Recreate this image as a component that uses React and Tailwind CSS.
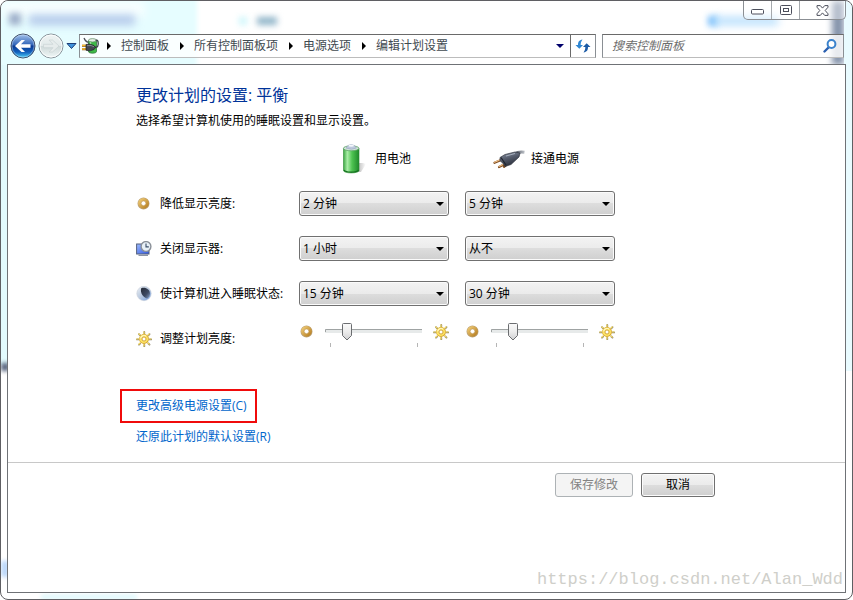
import { useState } from "react";

const breadcrumbs = ["控制面板", "所有控制面板项", "电源选项", "编辑计划设置"];

const timeouts = ["1 分钟", "2 分钟", "5 分钟", "15 分钟", "30 分钟", "1 小时", "从不"];

const rows = [
  { id: "dim", label: "降低显示亮度:", icon: RingIcon, battery: "2 分钟", plugged: "5 分钟" },
  { id: "display", label: "关闭显示器:", icon: DisplayIcon, battery: "1 小时", plugged: "从不" },
  { id: "sleep", label: "使计算机进入睡眠状态:", icon: MoonIcon, battery: "15 分钟", plugged: "30 分钟" },
];

function RingIcon() {
  return (
    <svg width="16" height="16" viewBox="0 0 16 16" className="shrink-0">
      <defs>
        <linearGradient id="ring" x1="0" y1="0" x2="1" y2="1">
          <stop offset="0" stopColor="#ecc772" />
          <stop offset="1" stopColor="#b98226" />
        </linearGradient>
      </defs>
      <circle cx="7.500" cy="7.500" r="4.100" fill="none" stroke="#8d6420" strokeWidth="3.800" opacity="0.6" />
      <circle cx="7.500" cy="7.300" r="3.900" fill="none" stroke="url(#ring)" strokeWidth="3" />
      <circle cx="7.500" cy="7.300" r="2.300" fill="#fff" stroke="#b98a3a" strokeWidth="0.5" />
    </svg>
  );
}

function SunIcon() {
  return (
    <svg width="16" height="16" viewBox="0 0 16 16" className="shrink-0">
      <g stroke="#8f8670" strokeWidth="1.800" strokeLinecap="round">
        <path d="M8.300 1v1.600M8.300 13.800v1.500M1 8.400h1.400M13.700 8.400h1.500M3 3.200l1.100 1.100M12.400 12.500l1.100 1.100M3 13.700l1.100-1.100M12.400 4.300l1.100-1.100" />
      </g>
      <g stroke="#f9dc58" strokeWidth="1.200" strokeLinecap="round">
        <path d="M8 .8v1.500M8 13.600v1.500M.8 8h1.500M13.600 8h1.500M2.800 2.800l1.100 1.100M12.100 12.100l1.100 1.100M2.800 13.300l1.100-1.100M12.100 4l1.100-1.100" />
      </g>
      <circle cx="8" cy="8" r="4.900" fill="#d8a62c" />
      <circle cx="7.800" cy="7.800" r="4.300" fill="#fbe263" />
      <path d="M4.600 7.400A3.600 3.600 0 0 1 10 5" fill="none" stroke="#fff8c8" strokeWidth="1.100" />
      <circle cx="8" cy="8" r="2" fill="#fff" stroke="#c9962a" strokeWidth="0.8" />
    </svg>
  );
}

function DisplayIcon() {
  return (
    <svg width="16" height="16" viewBox="0 0 16 16" className="shrink-0">
      <defs>
        <linearGradient id="screen" x1="0" y1="0" x2="1" y2="1">
          <stop offset="0" stopColor="#9dbcff" />
          <stop offset="1" stopColor="#2f55df" />
        </linearGradient>
      </defs>
      <rect x="0.6" y="3" width="12.400" height="10" fill="url(#screen)" stroke="#54607c" />
      <path d="M2.500 14.300h9.500" stroke="#8b93a4" strokeWidth="1.400" />
      <circle cx="10" cy="5.500" r="4.900" fill="#e8f0f6" stroke="#8a9098" strokeWidth="1.400" />
      <path d="M10 2.500v3.400h2.800" fill="none" stroke="#3a4e68" strokeWidth="1.100" />
    </svg>
  );
}

function MoonIcon() {
  return (
    <svg width="16" height="16" viewBox="0 0 16 16" className="shrink-0">
      <defs>
        <linearGradient id="moon" x1="0" y1="0" x2="1" y2="1">
          <stop offset="0" stopColor="#eef2f7" />
          <stop offset="0.5" stopColor="#b9c9df" />
          <stop offset="1" stopColor="#6d9be0" />
        </linearGradient>
        <linearGradient id="moonShade" x1="0" y1="0" x2="1" y2="1">
          <stop offset="0" stopColor="#262b36" />
          <stop offset="0.6" stopColor="#3d4a63" />
          <stop offset="1" stopColor="#8ba5cc" />
        </linearGradient>
      </defs>
      <circle cx="8" cy="7.500" r="7.200" fill="url(#moon)" stroke="#c9d0da" strokeWidth="0.6" />
      <path d="M5.200 2.200C9.500.600 14 3.500 14 7.600c0 2.200-1 4-2.600 5C7.500 11.800 3.800 7 5.200 2.200z" fill="url(#moonShade)" />
    </svg>
  );
}

function BatteryIcon() {
  return (
    <svg width="32" height="32" viewBox="0 0 32 32" className="shrink-0">
      <defs>
        <linearGradient id="cell" x1="0" x2="1">
          <stop offset="0" stopColor="#3da944" />
          <stop offset="0.25" stopColor="#a9eda6" />
          <stop offset="0.55" stopColor="#4fc452" />
          <stop offset="1" stopColor="#1f8a2b" />
        </linearGradient>
        <linearGradient id="cast" x1="0" x2="1">
          <stop offset="0" stopColor="#777" stopOpacity="0.6" />
          <stop offset="1" stopColor="#777" stopOpacity="0" />
        </linearGradient>
      </defs>
      <path d="M21 20h5l3 1-5 8h-5z" fill="url(#cast)" />
      <path d="M6.500 5.500v22c0 3.200 15.500 3.200 15.500 0v-22z" fill="url(#cell)" stroke="#2b8a32" strokeWidth="0.6" />
      <path d="M7 27c1 2.800 13.500 2.800 14.500 0" fill="none" stroke="#14701f" strokeWidth="1.100" />
      <ellipse cx="14.200" cy="5.300" rx="7.800" ry="2.500" fill="#cfe3d8" stroke="#5fa468" strokeWidth="0.8" />
      <path d="M9 5l2-2.500q3.200-1.800 6.400 0L19.500 5q-5 2.600-10.500 0z" fill="#bcc7dc" stroke="#93a0b8" strokeWidth="0.5" />
      <ellipse cx="14.200" cy="2.800" rx="2.800" ry="1" fill="#f4f7fc" />
    </svg>
  );
}

function PlugIcon() {
  return (
    <svg width="32" height="32" viewBox="0 0 32 32" className="shrink-0">
      <defs>
        <linearGradient id="plug" x1="0" y1="0" x2="0.4" y2="1">
          <stop offset="0" stopColor="#8f98a8" />
          <stop offset="0.5" stopColor="#555c6c" />
          <stop offset="1" stopColor="#2a2f3b" />
        </linearGradient>
        <linearGradient id="cord" gradientUnits="userSpaceOnUse" x1="22" y1="9" x2="32" y2="9">
          <stop offset="0" stopColor="#4a505c" />
          <stop offset="1" stopColor="#c4c8ce" />
        </linearGradient>
      </defs>
      <path d="M22 11c3-2.500 5-2.600 9.500-1.800" fill="none" stroke="url(#cord)" strokeWidth="3" />
      <path d="M1.500 19.800l9-3.800M6 24l8-4M11 23.800l3-2.500" stroke="#7c4a1e" strokeWidth="2.200" strokeLinecap="round" />
      <path d="M1.500 19.300l9-3.800M6 23.400l8-4" stroke="#f0c088" strokeWidth="1.100" strokeLinecap="round" />
      <path d="M7 14.500 12 11.500l10-2.500 5 1-1 4-8 7.500-6 2-2-3-3-3z" fill="url(#plug)" stroke="#30353f" strokeWidth="0.7" />
      <path d="M8 14.500l5 7.500" stroke="#1f242e" strokeWidth="1.200" />
      <path d="M13 13l9-2.500" stroke="#a7afbd" />
    </svg>
  );
}

function PowerIcon() {
  return (
    <svg width="18" height="18" viewBox="0 0 18 18" className="shrink-0">
      <path d="M6.500 3.500v11c0 2.300 8 2.300 8 0v-11z" fill="#3fba48" stroke="#246c2c" strokeWidth="0.7" />
      <path d="M8.500 5v9" stroke="#a2e8a0" strokeWidth="1.400" />
      <ellipse cx="10.500" cy="3.300" rx="4" ry="1.700" fill="#e4efe4" stroke="#5f8a64" strokeWidth="0.7" />
      <path d="M2 1c1 3 2.500 4 4.500 4.500" fill="none" stroke="#4b5058" strokeWidth="1.200" />
      <path d="M12 10c3.500 1 5-1 4-5.500-.5-1.500-1.800-1.500-2.500-1" fill="none" stroke="#3c424b" strokeWidth="1.300" />
      <path d="M0 8.700h4.500M0 12.300h4.500" stroke="#8a5c0c" strokeWidth="2" />
      <path d="M0 8.400h4.500M0 12h4.500" stroke="#f6b92c" strokeWidth="1.300" />
      <path d="M4 7.500l3.500-.5 4.500 1.500 1.500 2-1.500 2-4.500 1.500L4 13.200z" fill="#42474f" stroke="#1c1f24" strokeWidth="0.7" />
      <path d="M5 8.700l4-.2 3 1.200" fill="none" stroke="#90969f" strokeWidth="0.8" />
    </svg>
  );
}

function BackIcon() {
  return (
    <svg width="26" height="26" viewBox="0 0 26 26" className="shrink-0">
      <defs>
        <linearGradient id="back" x1="0" y1="0" x2="0" y2="1">
          <stop offset="0" stopColor="#a5c3ec" />
          <stop offset="0.45" stopColor="#3266b9" />
          <stop offset="0.5" stopColor="#0b3a92" />
          <stop offset="0.75" stopColor="#1260bd" />
          <stop offset="1" stopColor="#4fd6fb" />
        </linearGradient>
      </defs>
      <circle cx="13" cy="13" r="12" fill="url(#back)" stroke="#44516a" />
      <circle cx="13" cy="13" r="11" fill="none" stroke="#d4e8fb" strokeOpacity="0.4" />
      <path d="M5 13l6.500-6H15l-4 4.300h9.500v3.400H11l4 4.300h-3.500z" fill="#fff" />
    </svg>
  );
}

function ForwardIcon() {
  return (
    <svg width="26" height="26" viewBox="0 0 26 26" className="shrink-0">
      <defs>
        <linearGradient id="forward" x1="0" y1="0" x2="0" y2="1">
          <stop offset="0" stopColor="#eef3f3" />
          <stop offset="0.48" stopColor="#e2eaea" />
          <stop offset="0.52" stopColor="#d0dada" />
          <stop offset="1" stopColor="#f0f8f8" />
        </linearGradient>
      </defs>
      <circle cx="13" cy="13" r="12" fill="url(#forward)" stroke="#87939a" />
      <circle cx="13" cy="13" r="11" fill="none" stroke="#fff" strokeOpacity="0.8" />
      <path d="M21 13l-6.500-6H11l4 4.300H5.500v3.400H15l-4 4.300h3.500z" fill="#e6ecec" stroke="#c6d0d1" strokeWidth="0.6" />
    </svg>
  );
}

function RefreshIcon() {
  return (
    <svg width="16" height="16" viewBox="0 0 16 16">
      <path d="M.5 7H3c0-3 1-5 4.500-5.500C6 3.500 5.700 5 5.700 7H8l-3.700 3.800z" fill="#2f86d2" />
      <path d="M15.500 9H13c0 3-1 5-4.500 5.500C10 12.500 10.300 11 10.300 9H8l3.700-3.800z" fill="#1c5ba6" />
    </svg>
  );
}

function SearchIcon() {
  return (
    <svg width="14" height="14" viewBox="0 0 14 14" className="mr-1.5 shrink-0">
      <path d="M1.500 12.500l4-4" stroke="#2a5fb0" strokeWidth="2.400" strokeLinecap="round" />
      <circle cx="8.500" cy="5" r="3.900" fill="#fff" stroke="#3a82cc" strokeWidth="2" />
    </svg>
  );
}

function DownArrow({ className }) {
  return (
    <svg width="8" height="4" viewBox="0 0 8 4" className={className}>
      <path d="M0 0h8L4 4z" fill="currentColor" />
    </svg>
  );
}

// blurred shapes of the windows that show through the glass frame
function Glass() {
  return (
    <div className="absolute inset-0 overflow-hidden rounded-lg" aria-hidden="true">
      <div className="absolute -left-2 -top-2 h-20 w-[204px] bg-[#e6fdff] blur-[2px]" />
      <div className="absolute left-0 top-16 h-[300px] w-2 bg-[#e2fafd]" />
      <div className="absolute left-0 top-[362px] h-2 w-2 bg-[#53617c] blur-[2px]" />
      <div className="absolute left-0 top-[560px] h-4 w-2 bg-[#bcd8fa] blur-[2px]" />
      <div className="absolute left-0 top-0 h-4 w-36 bg-white/70 blur-[5px]" />
      <div className="absolute left-2 top-3 h-3 w-3 bg-[#9fb0cb] blur-[3px]" />
      <div className="absolute left-7 top-[14px] h-2.5 w-[106px] bg-[#b3c8ea] blur-[4px]" />
      <div className="absolute left-[238px] top-4 h-2 w-2 bg-[#cdf6fb] blur-[3px]" />
      <div className="absolute left-[256px] top-4 h-2 w-5 bg-[#8fb4c8] blur-[3px]" />
      <div className="absolute right-[134px] top-[15px] h-2.5 w-2.5 bg-[#7cc0fb] blur-[3px]" />
      <div className="absolute right-[74px] top-4 h-2 w-[64px] bg-[#b5defd] blur-[4px]" />
      <div className="absolute right-2 top-0 h-16 w-3 bg-[#8493ab] blur-[3px]" />
      <div className="absolute right-0 top-0 h-[370px] w-2 bg-[#e9fbff]" />
      <div className="absolute bottom-0 left-10 h-1 w-24 bg-[#d8f6fb] blur-[2px]" />
    </div>
  );
}

function WindowButtons() {
  const button = "flex h-full items-center justify-center";
  return (
    <div className="flex h-[19px] w-[103px] rounded-b-[5px] border border-t-0 border-[#8b8f94] bg-white/40">
      <button className={`${button} w-7 border-r border-[#a5a9ad]`} aria-label="最小化">
        <svg width="13" height="6" viewBox="0 0 13 6" className="mt-1">
          <rect x="0.5" y="0.5" width="12" height="4.500" rx="1" fill="#fff" stroke="#4c4f5c" />
        </svg>
      </button>
      <button className={`${button} w-7 border-r border-[#a5a9ad]`} aria-label="最大化">
        <svg width="12" height="10" viewBox="0 0 12 10">
          <rect x="0.5" y="0.5" width="11" height="9" rx="1" fill="#fff" stroke="#4c4f5c" />
          <rect x="3.500" y="3.500" width="5" height="3" fill="#fff" stroke="#4c4f5c" />
        </svg>
      </button>
      <button className={`${button} flex-1`} aria-label="关闭">
        <svg width="13" height="11" viewBox="0 0 13 11">
          <path
            d="M1 .600h3.300l2.200 2.500L8.700.600H12v1.600L9.200 5.500 12 8.800v1.600H8.700L6.500 7.900l-2.200 2.500H1V8.800l2.800-3.300L1 2.200z"
            fill="#fff"
            stroke="#4c4f5c"
          />
        </svg>
      </button>
    </div>
  );
}

function NavBar() {
  return (
    <div className="flex h-6 items-center pl-[3px] pr-0.5">
      <button aria-label="后退" className="shrink-0"><BackIcon /></button>
      <button aria-label="前进" className="ml-0.5 shrink-0"><ForwardIcon /></button>
      <button aria-label="最近的页面" className="ml-0.5 mr-0.5 shrink-0">
        <svg width="11" height="8" viewBox="0 0 11 8">
          <path d="M1 1.500h9L5.500 6.500z" fill="#3f93dc" stroke="#1e3f78" />
        </svg>
      </button>

      <div className="flex h-full min-w-0 flex-1 border border-b-[#bcbcbc] border-l-[#8a8f94] border-r-[#8a8f94] border-t-[#6a6a6a] bg-white/80">
        <nav className="flex min-w-0 flex-1 items-center overflow-hidden pl-0.5 text-[#3f4a50]">
          <div className="-mr-1 shrink-0"><PowerIcon /></div>
          {breadcrumbs.map((name) => (
            <div key={name} className="flex shrink-0 items-center">
              <span className="flex w-[25px] justify-center">
                <svg width="4" height="8" viewBox="0 0 4 8">
                  <path d="M0 0v8l4-4z" fill="#000" />
                </svg>
              </span>
              <button className="leading-5">{name}</button>
            </div>
          ))}
        </nav>
        <button aria-label="以前的位置" className="px-1.5 text-[#00006b]"><DownArrow /></button>
        <button aria-label="刷新" className="flex w-[25px] items-center justify-center border-l border-[#6a6a6a]">
          <RefreshIcon />
        </button>
      </div>

      <div className="ml-1.5 flex h-full w-[242px] items-center border border-b-[#bcbcbc] border-l-[#8a8f94] border-r-[#8a8f94] border-t-[#6a6a6a] bg-white/80">
        <input
          type="text"
          aria-label="搜索控制面板"
          placeholder="搜索控制面板"
          className="min-w-0 flex-1 bg-transparent pl-[9px] italic outline-none placeholder:text-[#6d6d6d]"
        />
        <SearchIcon />
      </div>
    </div>
  );
}

function TimeoutSelect({ id, label, defaultValue }) {
  return (
    <div className="relative self-center">
      <select
        id={id}
        aria-label={label}
        defaultValue={defaultValue}
        className="block h-[25px] w-full appearance-none rounded-[3px] border border-[#707070] bg-[linear-gradient(#f3f3f3,#ebebeb_50%,#dddddd_50%,#cfcfcf)] pl-[3px] pr-5 shadow-[inset_0_0_0_1px_#fbfbfb]"
      >
        {timeouts.map((t) => (
          <option key={t}>{t}</option>
        ))}
      </select>
      <DownArrow className="pointer-events-none absolute right-[5px] top-[11px]" />
    </div>
  );
}

function BrightnessSlider({ id, label }) {
  const [value, setValue] = useState(19);
  // thumb is 11px wide and travels between the two ticks
  const x = Math.round(6 + (value / 100) * 86);

  return (
    <div className="flex items-start justify-between">
      <div className="pt-0.5"><RingIcon /></div>
      <div className="relative h-[26px] w-[98px]">
        <svg width="98" height="26" viewBox="0 0 98 26">
          <defs>
            <linearGradient id={`${id}-thumb`} x1="0" y1="0" x2="0" y2="1">
              <stop offset="0" stopColor="#fafafa" />
              <stop offset="0.5" stopColor="#ececec" />
              <stop offset="1" stopColor="#cfd0d2" />
            </linearGradient>
          </defs>
          <rect x="0" y="7" width="97" height="4" fill="#e7eaea" />
          <path d="M.5 10V7.500H97" fill="none" stroke="#9fa3a3" />
          <path d="M5.500 21v4M92.500 21v4" stroke="#b5b5b5" />
          <path
            d={`M${x - 4.5} 2.500q0-1 1-1h7q1 0 1 1v11l-4.500 4.500-4.500-4.500z`}
            fill={`url(#${id}-thumb)`}
            stroke="#6b6d70"
          />
        </svg>
        <input
          id={id}
          type="range"
          aria-label={label}
          min="0"
          max="100"
          value={value}
          onChange={(e) => setValue(Number(e.target.value))}
          className="absolute inset-0 h-5 w-full cursor-default opacity-0"
        />
      </div>
      <div className="pt-0.5"><SunIcon /></div>
    </div>
  );
}

function PlanSettings() {
  return (
    <main className="ml-32 max-w-[579px] pt-[18px]">
      <h1 className="text-base leading-6 text-[#003399]">更改计划的设置: 平衡</h1>
      <p className="mt-1 leading-5">选择希望计算机使用的睡眠设置和显示设置。</p>

      <div className="mt-3 grid grid-cols-[147px_150px_150px] gap-x-4">
        <div className="col-start-2 flex items-center gap-1.5 pl-[38px]">
          <BatteryIcon />
          用电池
        </div>
        <div className="flex items-center gap-1.5 pl-7">
          <PlugIcon />
          接通电源
        </div>
      </div>

      <div className="mt-3 space-y-3">
        {rows.map(({ id, label, icon: Icon, battery, plugged }) => (
          <div key={id} className="grid h-[33px] grid-cols-[147px_150px_150px] gap-x-4">
            <label htmlFor={`${id}-battery`} className="flex items-center gap-2 whitespace-nowrap">
              <Icon />
              {label}
            </label>
            <TimeoutSelect id={`${id}-battery`} label={`${label} 用电池`} defaultValue={battery} />
            <TimeoutSelect id={`${id}-plugged`} label={`${label} 接通电源`} defaultValue={plugged} />
          </div>
        ))}
        <div className="grid h-[33px] grid-cols-[147px_150px_150px] gap-x-4">
          <label htmlFor="brightness-battery" className="flex items-center gap-2 whitespace-nowrap">
            <SunIcon />
            调整计划亮度:
          </label>
          <BrightnessSlider id="brightness-battery" label="调整计划亮度: 用电池" />
          <BrightnessSlider id="brightness-plugged" label="调整计划亮度: 接通电源" />
        </div>
      </div>

      <div className="-ml-4 mt-[34px] flex flex-col items-start text-[#0066cc]">
        <div className="flex h-[34px] items-center border-2 border-[#f00b0b] pl-3.5 pr-2">
          <a href="#advanced" className="leading-5">更改高级电源设置(C)</a>
        </div>
        <a href="#restore" className="ml-4 mt-1 leading-5">还原此计划的默认设置(R)</a>
      </div>
    </main>
  );
}

export default function App() {
  return (
    <div className="relative flex min-h-screen flex-col rounded-lg border border-[#5f5f63] bg-white px-1.5 pb-1.5 font-['Open_Sans','Noto_Sans_CJK_SC',sans-serif] text-xs text-black">
      <Glass />
      <header className="relative">
        <div className="flex h-[33px] items-start justify-end">
          <WindowButtons />
        </div>
        <NavBar />
      </header>

      <div className="relative mt-1.5 flex flex-1 flex-col border border-[#6f7276] bg-white">
        <PlanSettings />
        <footer className="mt-[15px] border-t border-[#c8c8c8]">
          <div className="ml-32 flex max-w-[579px] justify-end gap-2 pt-2.5">
            <button
              disabled
              className="h-6 w-[78px] rounded-[3px] border border-[#adb2b5] bg-[#f4f4f4] text-[#838383]"
            >
              保存修改
            </button>
            <button className="h-6 w-[74px] rounded-[3px] border border-[#707070] bg-[linear-gradient(#f3f3f3,#ebebeb_50%,#dddddd_50%,#cfcfcf)] shadow-[inset_0_0_0_1px_#fbfbfb]">
              取消
            </button>
          </div>
        </footer>
        <p className="mt-auto self-end pr-0.5 font-['Liberation_Mono',monospace] text-[17px] leading-6 text-[#cfcfca]">
          https://blog.csdn.net/Alan_Wdd
        </p>
      </div>
    </div>
  );
}
